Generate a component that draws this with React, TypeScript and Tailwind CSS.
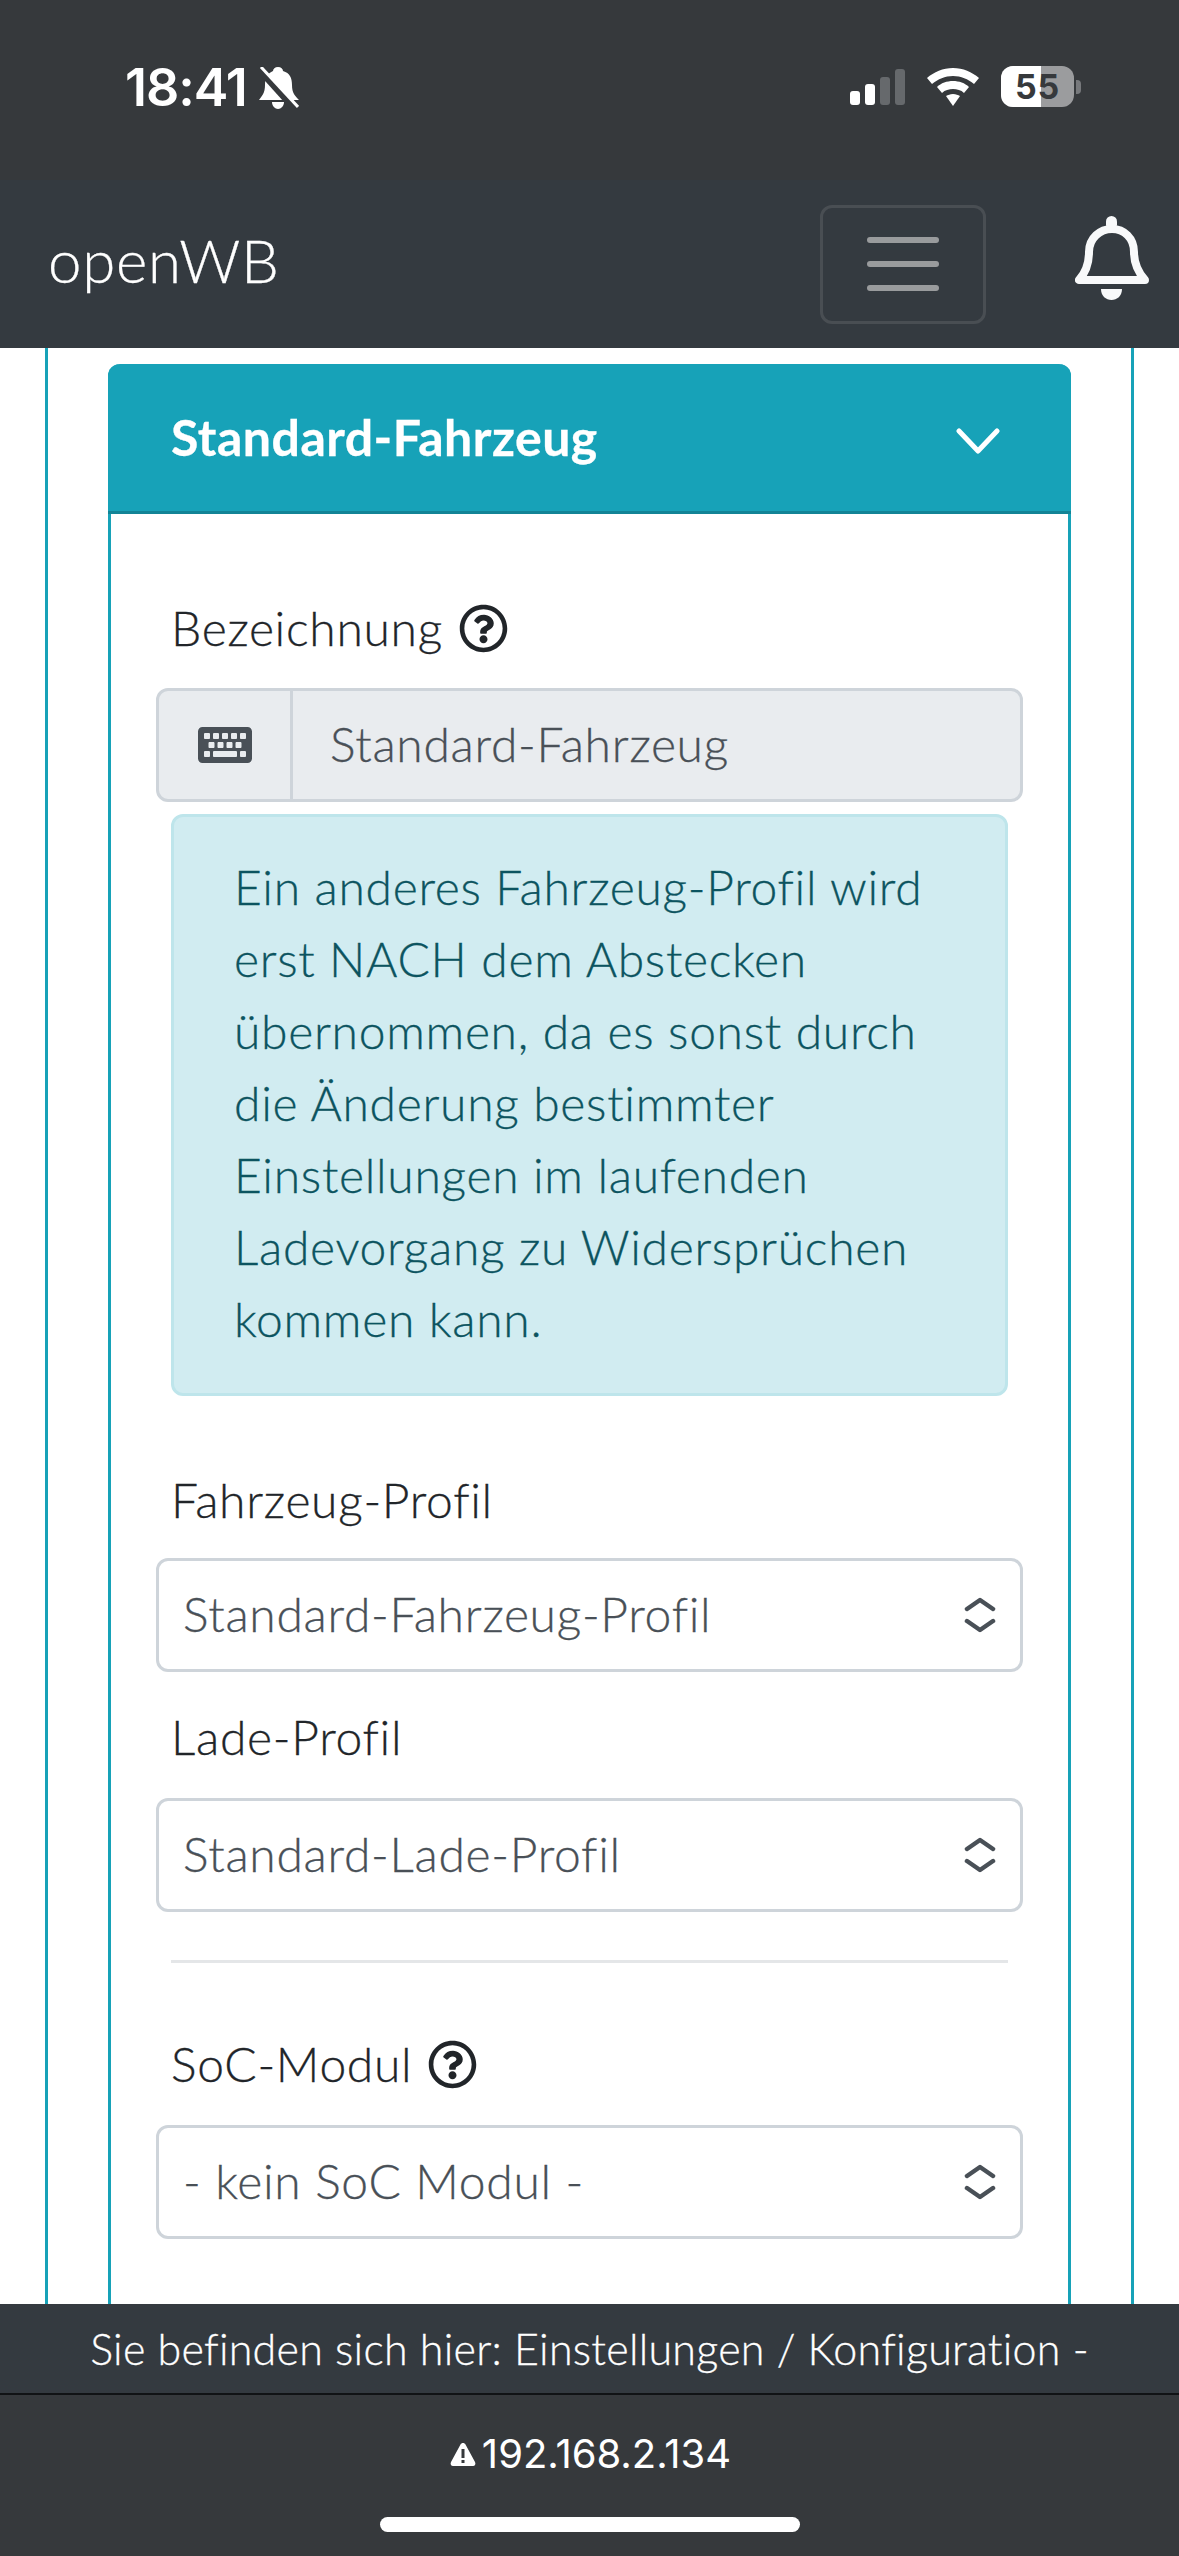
import React from 'react';
import { FaKeyboard, FaRegQuestionCircle } from 'react-icons/fa';

function SelectChevrons() {
    return (
        <svg width="32" height="36" viewBox="0 0 32 36" fill="none" stroke="#495057" strokeWidth="4.500" strokeLinecap="round" strokeLinejoin="round">
            <path d="M3 12 L16 3 L29 12" />
            <path d="M3 24 L16 33 L29 24" />
        </svg>
    );
}

function HelpIcon() {
    return <FaRegQuestionCircle className="text-[49px] text-[#212529]" />;
}

function SelectBox({ value }: { value: string }) {
    return (
        <div className="mx-[-15px] flex h-[114px] items-center justify-between rounded-[12px] border-[3px] border-[#ced4da] bg-white pl-[24px] pr-[24px] text-[#495057]">
            <span className="pb-[2px]">{value}</span>
            <SelectChevrons />
        </div>
    );
}

function StatusBar() {
    return (
        <div className="relative flex h-[180px] shrink-0 items-start justify-between bg-[#36393c] pl-[125px] pr-[98px] pt-[62px] text-white">
            <div className="flex items-center gap-[12px]">
                <span className="font-['Inter',sans-serif] text-[52px] font-semibold leading-[52px] tracking-[-1px] [-webkit-text-stroke:0px]">18:41</span>
                <svg width="40" height="42" viewBox="0 0 40 42" fill="white">
                    <path d="M19 0c3 0 5 2 5 4 7 2 9 7 9 14 0 8 3 11 7 15H0c3-4 6-7 6-15 0-7 3-12 8-14 0-2 2-4 5-4z" />
                    <path d="M13 35h12c0 4-3 7-6 7s-6-3-6-7z" />
                    <path d="M0 2 L36 42" stroke="#36393c" strokeWidth="7" />
                    <path d="M2 0 L39 40" stroke="white" strokeWidth="3" />
                </svg>
            </div>
            <div className="mt-[4px] flex items-center gap-[22px]">
                <div className="flex h-[36px] items-end gap-[5px]">
                    <div className="h-[14px] w-[10px] rounded-[3px] bg-white" />
                    <div className="h-[21px] w-[10px] rounded-[3px] bg-white" />
                    <div className="h-[28px] w-[10px] rounded-[3px] bg-[#66696c]" />
                    <div className="h-[36px] w-[10px] rounded-[3px] bg-[#66696c]" />
                </div>
                <svg width="52" height="38" viewBox="0 0 52 38" fill="white">
                    <path d="M26 0c10 0 19 4 26 10l-5 6C41 11 34 8 26 8S11 11 5 16L0 10C7 4 16 0 26 0z" />
                    <path d="M26 13c6 0 12 2 16 6l-5 6c-3-3-7-4-11-4s-8 1-11 4l-5-6c4-4 10-6 16-6z" />
                    <path d="M26 26c3 0 5 1 7 2l-7 10-7-10c2-1 4-2 7-2z" />
                </svg>
                <div className="flex items-center gap-[2px]">
                    <div className="relative flex h-[41px] w-[73px] items-center justify-center overflow-hidden rounded-[12px] bg-[#9b9c9e]">
                        <div className="absolute inset-y-0 left-0 w-[40px] bg-white" />
                        <span className="relative font-['Inter',sans-serif] text-[34px] font-bold leading-none text-[#36393c] [-webkit-text-stroke:0px]">55</span>
                    </div>
                    <div className="h-[14px] w-[5px] rounded-r-[4px] bg-[#77797c]" />
                </div>
            </div>
        </div>
    );
}

function NavBar() {
    return (
        <div className="flex h-[168px] shrink-0 items-center bg-[#343a40] pl-[48px] pr-[30px]">
            <span className="pb-[8px] text-[60px] leading-none text-white">openWB</span>
            <div className="ml-auto flex h-[119px] w-[166px] flex-col items-center justify-center gap-[18px] rounded-[12px] border-[3px] border-[#494e53]">
                <div className="h-[6px] w-[72px] rounded-[3px] bg-[#999b9d]" />
                <div className="h-[6px] w-[72px] rounded-[3px] bg-[#999b9d]" />
                <div className="h-[6px] w-[72px] rounded-[3px] bg-[#999b9d]" />
            </div>
            <svg className="mb-[12px] ml-[89px]" width="74" height="84" viewBox="0 0 74 84" fill="none">
                <rect x="31" y="0" width="11" height="14" rx="5.500" fill="#f8f9fa" />
                <path d="M37 13C25 13 14 22 14 36C14 46 12 55 4 64L70 64C62 55 59 46 59 36C59 22 49 13 37 13Z" stroke="#f8f9fa" strokeWidth="8" strokeLinejoin="round" />
                <path d="M26 73H47C47 80 42 84 36.500 84C31 84 26 80 26 73Z" fill="#f8f9fa" />
            </svg>
        </div>
    );
}

function Content() {
    return (
        <div className="flex-1 overflow-hidden bg-white px-[45px]">
            <div className="h-full border-x-[3px] border-[#17a2b8] px-[60px] pt-[16px]">
                <div className="h-full rounded-t-[12px] border-x-[3px] border-[#17a2b8]">
                    <div className="mx-[-3px] flex h-[150px] items-center justify-between rounded-t-[12px] border-b-[3px] border-[#138496] bg-[#17a2b8] pl-[63px] pr-[71px] text-white">
                        <span className="pb-[2px] text-[50px] font-bold tracking-[0.5px]">Standard-Fahrzeug</span>
                        <svg className="mt-[6px]" width="44" height="26" viewBox="0 0 44 26" fill="none" stroke="white" strokeWidth="5" strokeLinecap="round" strokeLinejoin="round">
                            <path d="M3 3 L22 23 L41 3" />
                        </svg>
                    </div>

                    <div className="px-[60px] text-[#212529]">
                        <div className="mt-[78px] flex h-[72px] items-center gap-[16px]">
                            <span>Bezeichnung</span>
                            <HelpIcon />
                        </div>

                        <div className="mx-[-15px] mt-[24px] flex h-[114px] rounded-[12px] border-[3px] border-[#ced4da] bg-[#e9ecef] text-[#495057]">
                            <div className="flex w-[134px] items-center justify-center border-r-[3px] border-[#ced4da]">
                                <FaKeyboard className="text-[54px]" />
                            </div>
                            <div className="flex items-center pb-[2px] pl-[37px]">Standard-Fahrzeug</div>
                        </div>

                        <div className="mt-[12px] rounded-[12px] border-[3px] border-[#bee5eb] bg-[#d1ecf1] px-[60px] pb-[38px] pt-[34px] text-[#0c5460]">
                            Ein anderes Fahrzeug-Profil wird erst NACH dem Abstecken übernommen, da es sonst durch die Änderung bestimmter Einstellungen im laufenden Ladevorgang zu Widersprüchen kommen kann.
                        </div>

                        <div className="mt-[68px] h-[72px]">Fahrzeug-Profil</div>
                        <div className="mt-[22px]">
                            <SelectBox value="Standard-Fahrzeug-Profil" />
                        </div>
                        <div className="mt-[29px] h-[72px]">Lade-Profil</div>
                        <div className="mt-[25px]">
                            <SelectBox value="Standard-Lade-Profil" />
                        </div>

                        <div className="mt-[48px] h-[3px] bg-[#e4e6e8]" />

                        <div className="mt-[65px] flex h-[72px] items-center gap-[16px]">
                            <span>SoC-Modul</span>
                            <HelpIcon />
                        </div>
                        <div className="mt-[25px]">
                            <SelectBox value="- kein SoC Modul -" />
                        </div>
                    </div>
                </div>
            </div>
        </div>
    );
}

export default function App() {
    return (
        <div className="flex h-[2556px] w-[1179px] flex-col overflow-hidden font-['Lato','Noto_Sans',sans-serif] text-[48px] font-light leading-[72px] tracking-[0.7px] [-webkit-text-stroke:0.3px] [font-variant-ligatures:none]">
            <StatusBar />
            <NavBar />
            <Content />

            {/* Footer */}
            <div className="flex h-[89px] shrink-0 items-center justify-center bg-[#343a40] text-[43px] leading-none tracking-[0.25px] text-white">
                Sie befinden sich hier: Einstellungen / Konfiguration -
            </div>

            {/* Browser address bar */}
            <div className="flex h-[163px] shrink-0 flex-col items-center border-t-[2px] border-[#111315] bg-[#36393c] text-white">
                <div className="ml-[2px] mt-[35px] flex items-center gap-[6px]">
                    <svg width="26" height="24" viewBox="0 0 26 24">
                        <path d="M13 1c1 0 2 .5 2.500 1.500L25 20c1 2 0 4-2 4H3c-2 0-3-2-2-4L10.500 2.500C11 1.500 12 1 13 1z" fill="white" />
                        <rect x="11.500" y="7" width="3" height="9" fill="#36393c" />
                        <rect x="11.500" y="18" width="3" height="3" fill="#36393c" />
                    </svg>
                    <span className="font-['Inter',sans-serif] text-[40px] font-normal leading-[48px] tracking-normal [-webkit-text-stroke:0px]">192.168.2.134</span>
                </div>
                <div className="mt-[39px] h-[15px] w-[420px] rounded-full bg-white" />
            </div>
        </div>
    );
}
